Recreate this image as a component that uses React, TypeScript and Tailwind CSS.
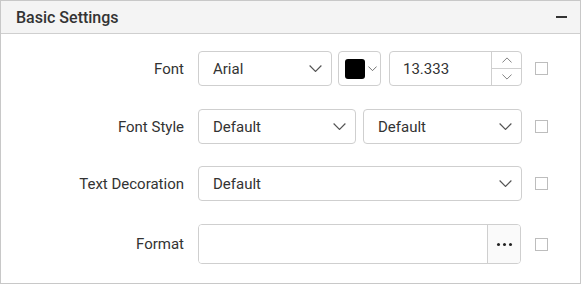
import React from 'react'

const Chevron = ({ className = '', size = 13 }: { className?: string; size?: number }) => (
    <svg width={size} height={size / 2 + 1} viewBox="0 0 12 7" className={className} fill="none">
        <path d="M0.5 0.5 L6 6 L11.5 0.5" stroke="currentColor" strokeWidth="1.1" />
    </svg>
)

const Check = () => <div className="w-[13px] h-[13px] border border-[#bdbdbd] bg-white shrink-0" />

const Select = ({ value, width }: { value: string; width: string }) => (
    <div className={`${width} h-full flex items-center justify-between border border-[#cfcfcf] rounded-[4px] pl-[14px] pr-[9px] bg-white`}>
        <span className="pt-[1px]">{value}</span>
        <Chevron className="text-[#555]" />
    </div>
)

export default function App() {
    return (
        <div
            className="w-[581px] h-[284px] border border-[#c8c8c8] bg-white text-[15px] text-[#333]"
            style={{ fontFamily: 'Roboto, "Liberation Sans", sans-serif' }}
        >
            {/* Header */}
            <div className="h-[33px] bg-[#f4f4f4] border-b border-[#cfcfcf] flex items-center justify-between pl-[15px] pr-[13px]">
                <span className="font-medium text-[16px] text-[#333] pt-[1px]">Basic Settings</span>
                <div className="w-[11px] h-[2px] bg-[#333]" />
            </div>

            {/* Body */}
            <div className="pt-[17px] flex flex-col">
                {/* Font */}
                <div className="flex items-center h-[35px]">
                    <div className="w-[183px] text-right pt-[1px]">Font</div>
                    <div className="ml-[14px] w-[324px] h-full flex">
                        <Select value="Arial" width="w-[134px]" />
                        <div className="ml-[6px] w-[43px] h-full border border-[#cfcfcf] rounded-[4px] flex items-center pl-[6px] gap-[3px]">
                            <div className="w-[20px] h-[20px] bg-black rounded-[3px]" />
                            <Chevron size={9} className="text-[#555]" />
                        </div>
                        <div className="ml-[8px] w-[133px] h-full border border-[#cfcfcf] rounded-[4px] flex">
                            <div className="flex-1 flex items-center pl-[13px] pt-[1px]">13.333</div>
                            <div className="w-[30px] border-l border-[#cfcfcf] flex flex-col">
                                <div className="flex-1 flex items-center justify-center border-b border-[#cfcfcf]">
                                    <Chevron size={10} className="text-[#777] rotate-180" />
                                </div>
                                <div className="flex-1 flex items-center justify-center">
                                    <Chevron size={10} className="text-[#777]" />
                                </div>
                            </div>
                        </div>
                    </div>
                    <div className="ml-[13px]"><Check /></div>
                </div>

                {/* Font Style */}
                <div className="flex items-center h-[35px] mt-[23px]">
                    <div className="w-[183px] text-right pt-[1px]">Font Style</div>
                    <div className="ml-[14px] w-[324px] h-full flex gap-[7px]">
                        <Select value="Default" width="w-[158px]" />
                        <Select value="Default" width="w-[159px]" />
                    </div>
                    <div className="ml-[13px]"><Check /></div>
                </div>

                {/* Text Decoration */}
                <div className="flex items-center h-[35px] mt-[22px]">
                    <div className="w-[183px] text-right pt-[1px]">Text Decoration</div>
                    <div className="ml-[14px] w-[324px] h-full flex">
                        <Select value="Default" width="w-[324px]" />
                    </div>
                    <div className="ml-[13px]"><Check /></div>
                </div>

                {/* Format */}
                <div className="flex items-center h-[40px] mt-[23px]">
                    <div className="w-[183px] text-right pt-[1px]">Format</div>
                    <div className="ml-[14px] w-[323px] h-full flex border border-[#cfcfcf] rounded-[4px] overflow-hidden">
                        <div className="flex-1 bg-white" />
                        <div className="w-[33px] border-l border-[#cfcfcf] bg-[#fafafa] flex items-center justify-center gap-[3px]">
                            <div className="w-[3px] h-[3px] rounded-full bg-[#222]" />
                            <div className="w-[3px] h-[3px] rounded-full bg-[#222]" />
                            <div className="w-[3px] h-[3px] rounded-full bg-[#222]" />
                        </div>
                    </div>
                    <div className="ml-[14px]"><Check /></div>
                </div>
            </div>
        </div>
    )
}
